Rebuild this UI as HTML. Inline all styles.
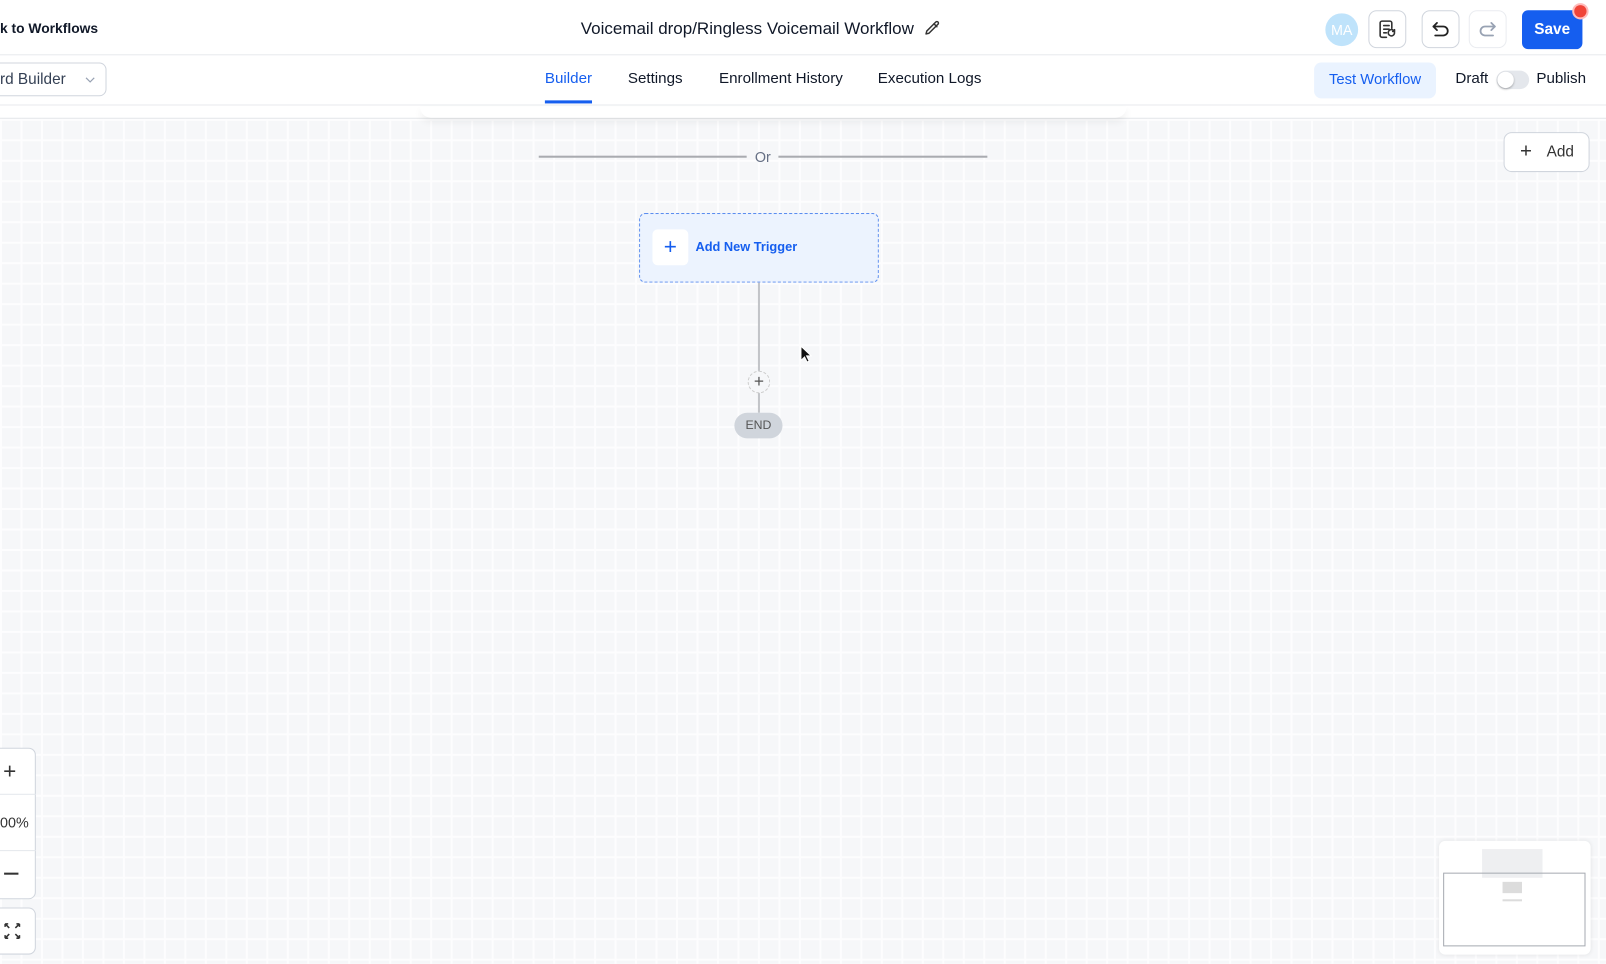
<!DOCTYPE html>
<html><head><style>
*{margin:0;padding:0;box-sizing:border-box}
body{width:1606px;height:963px;overflow:hidden;background:#fff;font-family:"Liberation Sans",Arial,sans-serif;color:#101828;position:relative}
#wrap{position:absolute;left:0;top:0;width:1568px;height:941px;transform:scale(1.02423);transform-origin:0 0}
.abs{position:absolute}
#hdr{left:0;top:0;width:1568px;height:54px;border-bottom:1px solid #e8eaed}
#tabs{left:0;top:54px;width:1568px;height:49px;border-bottom:1px solid #e8eaed}
#canvas{left:0;top:115px;width:1568px;height:826px;background-color:#f6f7f9;
background-image:linear-gradient(#fdfdfe 2px,transparent 2px),linear-gradient(90deg,#fdfdfe 2px,transparent 2px);
background-size:20px 20px;background-position:0 0;border-top:1px solid #e6e8eb}
.btn{border:1px solid #d0d5dd;border-radius:8px;background:#fff}
.tab{top:69px;font-size:14.8px;color:#101828}
</style></head><body><div id="wrap">
<div id="hdr" class="abs"></div>
<div class="abs" style="left:0;top:20px;font-size:13.5px;font-weight:bold">k to Workflows</div>
<div class="abs" style="left:567px;top:18px;font-size:16.6px">Voicemail drop/Ringless Voicemail Workflow</div>
<svg class="abs" style="left:902px;top:19px" width="17" height="17" viewBox="0 0 24 24" fill="none" stroke="#333" stroke-width="2" stroke-linecap="round" stroke-linejoin="round"><path d="M16.5 3.5a2.1 2.1 0 013 3L7 19l-4 1 1-4z"/><path d="M14 6l4 4"/></svg>
<div class="abs" style="left:1294px;top:13px;width:32px;height:32px;border-radius:50%;background:#bfe3fb;color:#fff;font-size:14px;text-align:center;line-height:32px">MA</div>
<div class="abs btn" style="left:1336px;top:10px;width:37px;height:37px"></div>
<svg class="abs" style="left:1344px;top:18px" width="21" height="21" viewBox="0 0 24 24" fill="none" stroke="#333" stroke-width="1.8" stroke-linecap="round"><path d="M11 21H6a2 2 0 01-2-2V5a2 2 0 012-2h9a2 2 0 012 2v6"/><path d="M8 8h6M8 12h6M8 16h3"/><path d="M20 16a3.5 3.5 0 11-1-2.5M20 12.5v2h-2"/></svg>
<div class="abs btn" style="left:1388px;top:10px;width:37px;height:37px"></div>
<svg class="abs" style="left:1396px;top:18px" width="21" height="21" viewBox="0 0 24 24" fill="none" stroke="#222" stroke-width="2" stroke-linecap="round" stroke-linejoin="round"><path d="M8 5L4 9l4 4"/><path d="M4 9h11a5 5 0 010 10H6"/></svg>
<div class="abs btn" style="left:1434px;top:10px;width:37px;height:37px;border-color:#eaecf0"></div>
<svg class="abs" style="left:1442px;top:18px" width="21" height="21" viewBox="0 0 24 24" fill="none" stroke="#98a2b3" stroke-width="2" stroke-linecap="round" stroke-linejoin="round"><path d="M16 5l4 4-4 4"/><path d="M20 9H9a5 5 0 000 10h9"/></svg>
<div class="abs" style="left:1486px;top:10px;width:59px;height:38px;border-radius:6px;background:#155eef;color:#fff;font-size:15px;font-weight:bold;text-align:center;line-height:38px">Save</div>
<div class="abs" style="left:1537px;top:5px;width:12px;height:12px;border-radius:50%;background:#f04438;box-shadow:0 0 0 2px #fbb"></div>

<div id="tabs" class="abs"></div>
<div class="abs" style="left:-10px;top:61px;width:114px;height:33px;border:1px solid #d0d5dd;border-radius:7px"></div>
<div class="abs" style="left:0;top:69px;font-size:15px;color:#344054">rd Builder</div>
<svg class="abs" style="left:82px;top:72px" width="12" height="12" viewBox="0 0 12 12" fill="none" stroke="#98a2b3" stroke-width="1.2"><path d="M2 4l4 4 4-4"/></svg>
<div class="abs tab" style="left:532px;color:#155eef">Builder</div>
<div class="abs" style="left:532px;top:98px;width:46px;height:3px;background:#155eef"></div>
<div class="abs tab" style="left:613px">Settings</div>
<div class="abs tab" style="left:702px">Enrollment History</div>
<div class="abs tab" style="left:857px">Execution Logs</div>
<div class="abs" style="left:1283px;top:61px;width:119px;height:35px;border-radius:7px;background:#eaf3ff;color:#155eef;font-size:14.5px;text-align:center;line-height:35px">Test Workflow</div>
<div class="abs tab" style="left:1421px">Draft</div>
<div class="abs" style="left:1461px;top:69px;width:32px;height:18px;border-radius:9px;background:#e4e7ec"></div>
<div class="abs" style="left:1462px;top:70px;width:16px;height:16px;border-radius:50%;background:#fff;box-shadow:0 1px 2px rgba(0,0,0,.3)"></div>
<div class="abs tab" style="left:1500px">Publish</div>

<div id="canvas" class="abs"></div>
<div class="abs" style="left:410px;top:104px;width:690px;height:11px;background:#fff;box-shadow:0 4px 8px rgba(0,0,0,.06);border-radius:0 0 14px 14px"></div>
<div class="abs" style="left:526px;top:152px;width:203px;height:2px;background:#a9abb0"></div>
<div class="abs" style="left:760px;top:152px;width:204px;height:2px;background:#a9abb0"></div>
<div class="abs" style="left:737px;top:145px;font-size:14px;color:#667085">Or</div>
<div class="abs btn" style="left:1468px;top:129px;width:84px;height:39px"></div>
<div class="abs" style="left:1484px;top:137px;font-size:20px;color:#333;line-height:22px">+</div>
<div class="abs" style="left:1510px;top:140px;font-size:15px;color:#333">Add</div>

<div class="abs" style="left:624px;top:208px;width:234px;height:68px;border:1.5px dashed #5b8def;border-radius:6px;background:#ecf3fe"></div>
<div class="abs" style="left:637px;top:224px;width:35px;height:35px;border-radius:5px;background:#fff;color:#155eef;font-size:22px;text-align:center;line-height:33px">+</div>
<div class="abs" style="left:679px;top:234px;font-size:12.5px;font-weight:bold;color:#155eef">Add New Trigger</div>
<div class="abs" style="left:740px;top:276px;width:2px;height:127px;background:#c2c4c8"></div>
<div class="abs" style="left:730px;top:362px;width:22px;height:22px;border-radius:50%;border:1px dashed #ccc;background:#f6f7f9;color:#555;font-size:17px;text-align:center;line-height:20px">+</div>
<div class="abs" style="left:717px;top:403px;width:47px;height:25px;border-radius:13px;background:#d0d5dc;color:#555;font-size:12px;text-align:center;line-height:25px">END</div>
<svg class="abs" style="left:781px;top:337px" width="12" height="18" viewBox="0 0 12 18"><path d="M1 1v14l3.5-3.5 2.5 5 2-1-2.5-5H11z" fill="#111" stroke="#fff" stroke-width="1"/></svg>

<div class="abs" style="left:-10px;top:730px;width:45px;height:148px;border:1px solid #d0d5dd;border-radius:7px;background:#fff"></div>
<div class="abs" style="left:-10px;top:775px;width:45px;height:1px;background:#e4e7ec"></div>
<div class="abs" style="left:-10px;top:830px;width:45px;height:1px;background:#e4e7ec"></div>
<div class="abs" style="left:3px;top:740px;font-size:22px;color:#333">+</div>
<div class="abs" style="left:0;top:795px;font-size:14px;color:#333">00%</div>
<div class="abs" style="left:4px;top:852px;width:14px;height:1.5px;background:#333"></div>
<div class="abs" style="left:-10px;top:886px;width:45px;height:46px;border:1px solid #d0d5dd;border-radius:7px;background:#fff"></div>
<svg class="abs" style="left:3px;top:900px" width="18" height="18" viewBox="0 0 18 18" fill="none" stroke="#333" stroke-width="1.5"><path d="M2 2l4 4M2 2h3M2 2v3M16 2l-4 4M16 2h-3M16 2v3M2 16l4-4M2 16h3M2 16v-3M16 16l-4-4M16 16h-3M16 16v-3"/></svg>

<div class="abs" style="left:1405px;top:821px;width:148px;height:111px;border-radius:6px;background:#fff;box-shadow:0 0 4px rgba(0,0,0,.08)"></div>
<div class="abs" style="left:1447px;top:829px;width:59px;height:28px;background:#eeeff1"></div>
<div class="abs" style="left:1409px;top:852px;width:139px;height:72px;border:1.5px solid #a7abb2"></div>
<div class="abs" style="left:1467px;top:861px;width:19px;height:11px;background:#dcdcdc"></div>
<div class="abs" style="left:1467px;top:878px;width:19px;height:2px;background:#dcdcdc"></div>
</div></body></html>
